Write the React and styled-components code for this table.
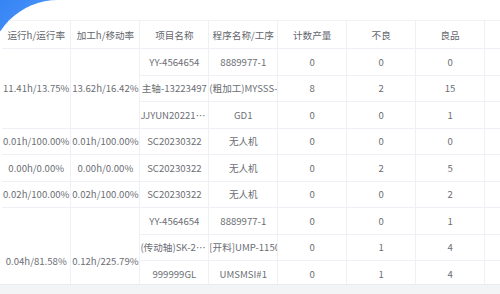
import React from "react"
import styled, { createGlobalStyle } from "styled-components"

const GlobalStyle = createGlobalStyle`
  html, body {
    margin: 0;
    padding: 0;
    background: #fff;
  }
  body {
    font-family: "Noto Sans CJK SC", "Noto Sans", sans-serif;
  }
`

const Screen = styled.div`
  width: 500px;
  height: 294px;
  overflow: hidden;
  background: linear-gradient(135deg, #3582f4, #5aa8ff) no-repeat 0 0 / 70px 50px;
`

// white panel; its big rounded corner starts just off the left edge
const Card = styled.div`
  height: 100%;
  margin-left: -11px;
  background: #fff;
  border-top-left-radius: 69px;
  padding: 20px 0 0 13px;
  box-sizing: border-box;
  display: flex;
  flex-direction: column;
  overflow: hidden;
`

const TableWrap = styled.div`
  flex: 1;
  overflow: hidden;
`

const Table = styled.table`
  table-layout: fixed;
  border-collapse: collapse;
  width: ${(p) => p.$cols * 69}px;
  font-size: 9.6px;
  color: #6b6e74;
`

const HeadCell = styled.th`
  height: 27px;
  padding: 0;
  font-weight: 400;
  color: #63666c;
  text-align: center;
  border-top: 1px solid #f1f2f5;
  border-right: 1px solid #edf0f4;
  border-bottom: 1px solid #edf0f4;
  white-space: nowrap;
  overflow: hidden;
`

const Cell = styled.td`
  height: 26.5px;
  padding: ${(p) => (p.$low ? "28px 0 0" : "0")};
  text-align: center;
  border-right: 1px solid #edf0f4;
  border-bottom: 1px solid #edf0f4;
  white-space: nowrap;
  overflow: hidden;
  text-overflow: ${(p) => (p.$clip ? "clip" : "ellipsis")};
  box-sizing: border-box;
`

const Footer = styled.div`
  height: 9px;
  flex: none;
  margin-left: -2px;
  background: #f3f4f6;
  border-top: 1px solid #e9ebef;
`

const headers = ["运行h/运行率", "加工h/移动率", "项目名称", "程序名称/工序", "计数产量", "不良", "良品", ""]

const groups = [
  {
    run: "11.41h/13.75%",
    work: "13.62h/16.42%",
    rows: [
      ["YY-4564654", "8889977-1", "0", "0", "0"],
      ["主轴-13223497", "(粗加工)MYSSS-1", "8", "2", "15"],
      ["JJYUN20221201", "GD1", "0", "0", "1"],
    ],
  },
  { run: "0.01h/100.00%", work: "0.01h/100.00%", rows: [["SC20230322", "无人机", "0", "0", "0"]] },
  { run: "0.00h/0.00%", work: "0.00h/0.00%", rows: [["SC20230322", "无人机", "0", "2", "5"]] },
  { run: "0.02h/100.00%", work: "0.02h/100.00%", rows: [["SC20230322", "无人机", "0", "0", "2"]] },
  {
    run: "0.04h/81.58%",
    work: "0.12h/225.79%",
    low: true,
    rows: [
      ["YY-4564654", "8889977-1", "0", "0", "1"],
      ["(传动轴)SK-2023", "[开料]UMP-1150", "0", "1", "4"],
      ["999999GL", "UMSMSI#1", "0", "1", "4"],
    ],
  },
]

export default function App() {
  return (
    <>
      <GlobalStyle />
      <Screen>
        <Card>
          <TableWrap>
            <Table $cols={headers.length}>
              <thead>
                <tr>
                  {headers.map((h, i) => (
                    <HeadCell key={i}>{h}</HeadCell>
                  ))}
                </tr>
              </thead>
              <tbody>
                {groups.map((g, gi) =>
                  g.rows.map((r, ri) => (
                    <tr key={gi + "-" + ri}>
                      {ri === 0 && (
                        <>
                          <Cell rowSpan={g.rows.length} $low={g.low} $clip>{g.run}</Cell>
                          <Cell rowSpan={g.rows.length} $low={g.low} $clip>{g.work}</Cell>
                        </>
                      )}
                      <Cell>{r[0]}</Cell>
                      <Cell $clip>{r[1]}</Cell>
                      <Cell>{r[2]}</Cell>
                      <Cell>{r[3]}</Cell>
                      <Cell>{r[4]}</Cell>
                      <Cell />
                    </tr>
                  ))
                )}
              </tbody>
            </Table>
          </TableWrap>
          <Footer />
        </Card>
      </Screen>
    </>
  )
}
